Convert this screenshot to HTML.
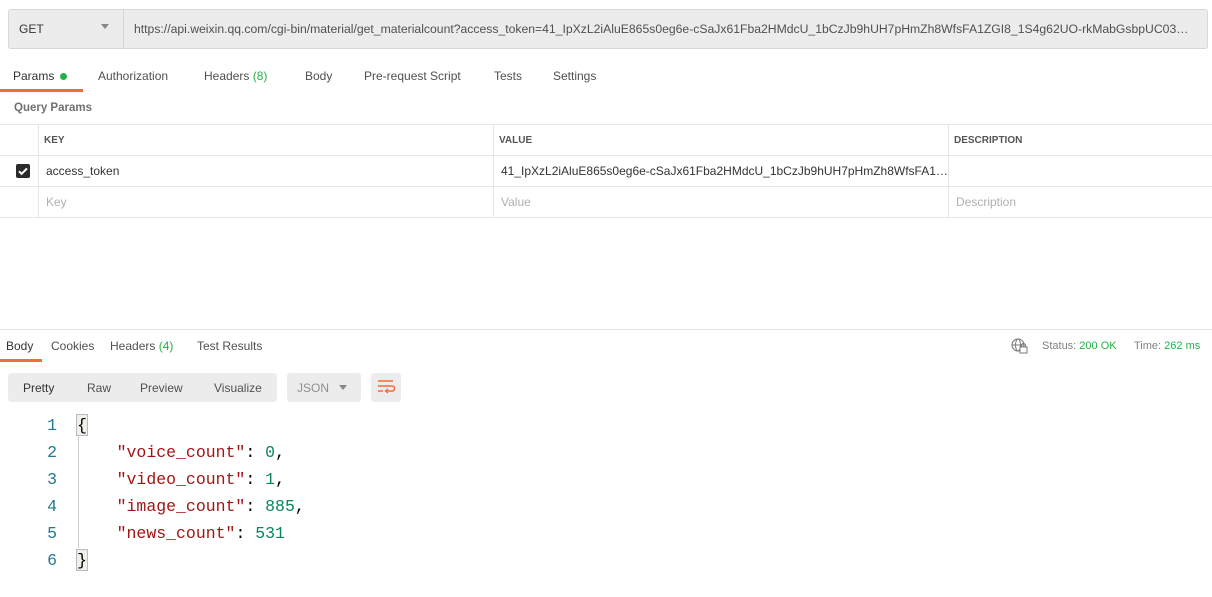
<!DOCTYPE html>
<html><head><meta charset="utf-8"><style>
*{box-sizing:border-box;margin:0;padding:0}
body{width:1212px;height:597px;background:#fff;font-family:"Liberation Sans",sans-serif;font-size:12px;color:#505050;position:relative;overflow:hidden}
.a{position:absolute;white-space:nowrap}
.g{color:#26b047}
.mono{font-family:"Liberation Mono",monospace;font-size:16.5px}
</style></head><body>
<div class="a" style="left:8px;top:9px;width:1200px;height:40px;background:#ececec;border:1px solid #d8d8d8;border-radius:3px"></div>
<div class="a" style="left:123px;top:10px;width:1px;height:38px;background:#d4d4d4"></div>
<div class="a" style="left:19px;top:22px;font-size:12px;color:#333">GET</div>
<div class="a" style="left:101px;top:24px;width:0;height:0;border-left:4px solid transparent;border-right:4px solid transparent;border-top:5px solid #888"></div>
<div class="a" style="left:134px;top:22px;color:#505050;font-size:12.2px;width:1063px;overflow:hidden;text-overflow:ellipsis">https://api.weixin.qq.com/cgi-bin/material/get_materialcount?access_token=41_IpXzL2iAluE865s0eg6e-cSaJx61Fba2HMdcU_1bCzJb9hUH7pHmZh8WfsFA1ZGI8_1S4g62UO-rkMabGsbpUC03MabcdEFG</div>

<div class="a" style="left:13px;top:69px;color:#333">Params <span style="display:inline-block;width:7px;height:7px;border-radius:50%;background:#26b047;margin-left:2px"></span></div>
<div class="a" style="left:0;top:89px;width:83px;height:3px;background:#f26b3a"></div>
<div class="a" style="left:98px;top:69px">Authorization</div>
<div class="a" style="left:204px;top:69px">Headers <span class="g">(8)</span></div>
<div class="a" style="left:305px;top:69px">Body</div>
<div class="a" style="left:364px;top:69px">Pre-request Script</div>
<div class="a" style="left:494px;top:69px">Tests</div>
<div class="a" style="left:553px;top:69px">Settings</div>
<div class="a" style="left:14px;top:102px;color:#707070;font-weight:bold;font-size:11.5px">Query Params</div>

<div class="a" style="left:0;top:124px;width:1212px;height:1px;background:#e6e6e6"></div>
<div class="a" style="left:0;top:155px;width:1212px;height:1px;background:#e6e6e6"></div>
<div class="a" style="left:0;top:186px;width:1212px;height:1px;background:#e6e6e6"></div>
<div class="a" style="left:0;top:217px;width:1212px;height:1px;background:#e6e6e6"></div>
<div class="a" style="left:38px;top:124px;width:1px;height:93px;background:#e6e6e6"></div>
<div class="a" style="left:493px;top:124px;width:1px;height:93px;background:#e6e6e6"></div>
<div class="a" style="left:948px;top:124px;width:1px;height:93px;background:#e6e6e6"></div>
<div class="a" style="left:44px;top:135px;font-size:10px;font-weight:bold;color:#555">KEY</div>
<div class="a" style="left:499px;top:135px;font-size:10px;font-weight:bold;color:#555">VALUE</div>
<div class="a" style="left:954px;top:135px;font-size:10px;font-weight:bold;color:#555">DESCRIPTION</div>
<div class="a" style="left:16px;top:164px;width:14px;height:14px;background:#2b2b2b;border-radius:2px"><svg width="14" height="14" viewBox="0 0 14 14"><path d="M3 7.2l2.6 2.6L11 4.4" stroke="#fff" stroke-width="2" fill="none"/></svg></div>
<div class="a" style="left:46px;top:164px;color:#333">access_token</div>
<div class="a" style="left:501px;top:164px;color:#333">41_IpXzL2iAluE865s0eg6e-cSaJx61Fba2HMdcU_1bCzJb9hUH7pHmZh8WfsFA1…</div>
<div class="a" style="left:46px;top:195px;color:#b0b0b0">Key</div>
<div class="a" style="left:501px;top:195px;color:#b0b0b0">Value</div>
<div class="a" style="left:956px;top:195px;color:#b0b0b0">Description</div>

<div class="a" style="left:0;top:329px;width:1212px;height:1px;background:#e2e2e2"></div>
<div class="a" style="left:6px;top:339px;color:#333">Body</div>
<div class="a" style="left:0;top:359px;width:42px;height:3px;background:#f26b3a"></div>
<div class="a" style="left:51px;top:339px">Cookies</div>
<div class="a" style="left:110px;top:339px">Headers <span class="g">(4)</span></div>
<div class="a" style="left:197px;top:339px">Test Results</div>
<svg class="a" style="left:1011px;top:338px" width="17" height="16" viewBox="0 0 17 16"><circle cx="7" cy="7" r="6" fill="none" stroke="#777" stroke-width="1.1"/><ellipse cx="7" cy="7" rx="2.5" ry="6" fill="none" stroke="#777" stroke-width="1"/><path d="M1 7h12" stroke="#777"/><rect x="9" y="9" width="7" height="6" fill="#fff" stroke="#777"/><path d="M10.5 9V7.5a2 2 0 0 1 4 0V9" fill="none" stroke="#777"/></svg>
<div class="a" style="left:1042px;top:340px;font-size:11px;color:#808080">Status: <span class="g">200 OK</span></div>
<div class="a" style="left:1134px;top:340px;font-size:11px;color:#808080">Time: <span class="g">262 ms</span></div>

<div class="a" style="left:8px;top:373px;width:269px;height:29px;background:#ececec;border-radius:3px"></div>
<div class="a" style="left:23px;top:381px;color:#333">Pretty</div>
<div class="a" style="left:87px;top:381px">Raw</div>
<div class="a" style="left:140px;top:381px">Preview</div>
<div class="a" style="left:214px;top:381px">Visualize</div>
<div class="a" style="left:287px;top:373px;width:74px;height:29px;background:#ececec;border-radius:3px"></div>
<div class="a" style="left:297px;top:381px;color:#909090">JSON</div>
<div class="a" style="left:339px;top:385px;width:0;height:0;border-left:4px solid transparent;border-right:4px solid transparent;border-top:5px solid #888"></div>
<div class="a" style="left:371px;top:373px;width:30px;height:29px;background:#ececec;border-radius:3px"></div>
<svg class="a" style="left:377px;top:379px" width="18" height="16" viewBox="0 0 18 16"><path d="M1 2h15M1 7h14a2.5 2.5 0 0 1 0 5H9M1 12h5" stroke="#f26b3a" stroke-width="1.6" fill="none"/><path d="M11 10l-2.5 2 2.5 2" stroke="#f26b3a" stroke-width="1.4" fill="none"/></svg>

<div class="a" style="left:78px;top:436px;width:1px;height:112px;background:#ccc"></div>
<div class="a" style="left:76px;top:414px;width:12px;height:22px;border:1px solid #bbb;background:#eef0ea"></div>
<div class="a" style="left:76px;top:549px;width:12px;height:22px;border:1px solid #bbb;background:#eef0ea"></div>
<div class="a mono" style="left:0;top:412px;width:57px;text-align:right;line-height:27px;color:#237893">1<br>2<br>3<br>4<br>5<br>6</div>
<div class="a mono" style="left:77px;top:412px;line-height:27px;color:#000">{<br>&nbsp;&nbsp;&nbsp;&nbsp;<span style="color:#a31515">"voice_count"</span>: <span style="color:#098658">0</span>,<br>&nbsp;&nbsp;&nbsp;&nbsp;<span style="color:#a31515">"video_count"</span>: <span style="color:#098658">1</span>,<br>&nbsp;&nbsp;&nbsp;&nbsp;<span style="color:#a31515">"image_count"</span>: <span style="color:#098658">885</span>,<br>&nbsp;&nbsp;&nbsp;&nbsp;<span style="color:#a31515">"news_count"</span>: <span style="color:#098658">531</span><br>}</div>
</body></html>
